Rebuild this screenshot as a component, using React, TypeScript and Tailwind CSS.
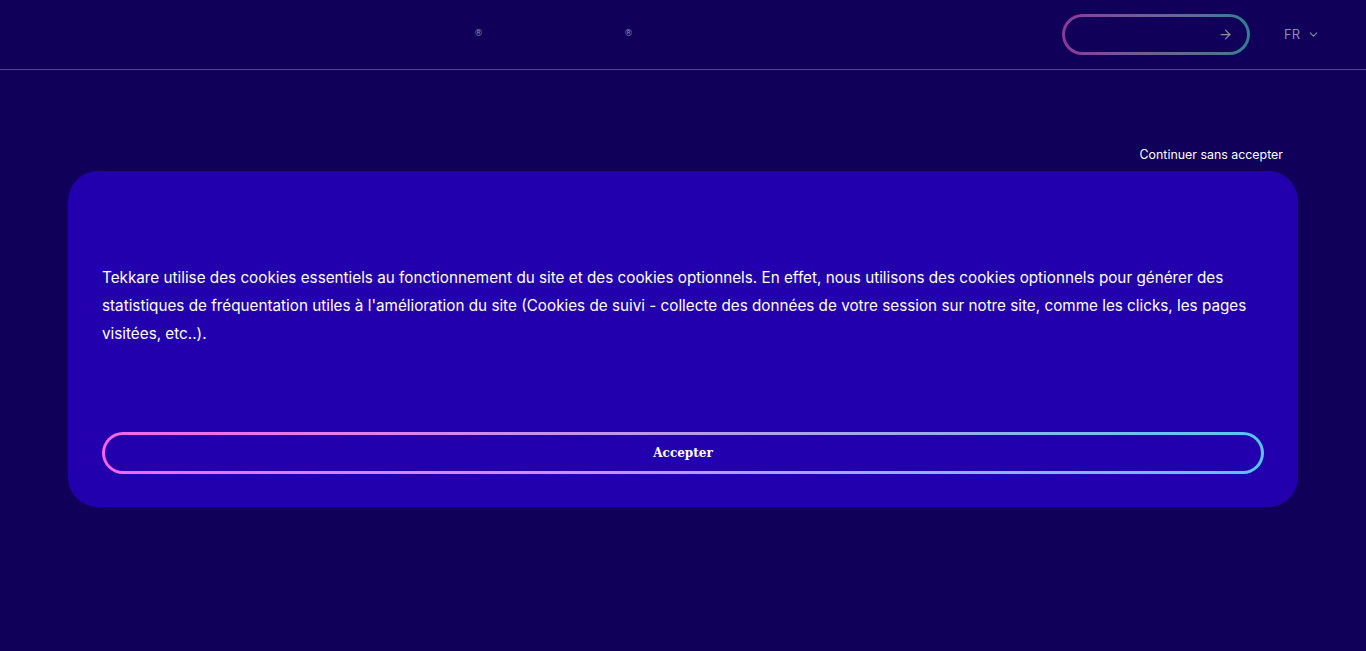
import { ArrowRight, ChevronDown } from "lucide-react";

const sans = { fontFamily: "Inter, 'Open Sans', sans-serif" };
const reg = { fontFamily: "'DejaVu Sans', sans-serif" };

const Header = () => {
  return (
    <header className="flex h-[70px] items-center border-b border-[#4d4a94] pr-[46px]">
      <div className="relative h-full flex-1">
        <span className="absolute left-[474px] top-[27px] text-[9px] leading-[12px] text-[#8d88b8]" style={reg}>
          ®
        </span>
        <span className="absolute left-[624px] top-[27px] text-[9px] leading-[12px] text-[#8d88b8]" style={reg}>
          ®
        </span>
      </div>
      <div className="mt-[-1px] rounded-full bg-gradient-to-r from-[#8a3a98] to-[#2f7f92] p-[3px]">
        <div className="flex h-[35px] w-[182px] items-center justify-end rounded-full bg-[#10005a] pr-[14px]">
          <ArrowRight className="h-[15px] w-[15px] text-[#8e8a9a]" strokeWidth={2} />
        </div>
      </div>
      <div className="ml-[34px] flex items-center gap-[7px] text-[13px] text-[#8e8aa8]" style={sans}>
        FR
        <ChevronDown className="h-[13px] w-[13px]" strokeWidth={2} />
      </div>
    </header>
  );
};

export default function App() {
  return (
    <div className="min-h-[651px] bg-[#10005a]" style={sans}>
      <Header />
      <main className="px-[68px] pt-[75px]">
        <div className="flex justify-end pr-[15px]">
          <button className="text-[12.4px] leading-[20px] text-white">Continuer sans accepter</button>
        </div>
        <div className="mt-[6px] rounded-[30px] bg-[#2300ae] px-[34px] pt-[93px] pb-[33px]">
          <p className="text-[15.25px] leading-[28px] text-white">
            Tekkare utilise des cookies essentiels au fonctionnement du site et des cookies optionnels. En effet, nous
            utilisons des cookies optionnels pour générer des statistiques de fréquentation utiles à l'amélioration du
            site (Cookies de suivi - collecte des données de votre session sur notre site, comme les clicks, les pages
            visitées, etc..).
          </p>
          <div className="mt-[84px] rounded-full bg-gradient-to-r from-[#f763f2] via-[#b79af1] to-[#55c5f7] p-[3px]">
            <button
              className="flex h-[36px] w-full items-center justify-center rounded-full bg-[#2300ae] text-[12px] font-bold text-white"
              style={{ fontFamily: "'DejaVu Serif', serif" }}
            >
              Accepter
            </button>
          </div>
        </div>
      </main>
    </div>
  );
}
